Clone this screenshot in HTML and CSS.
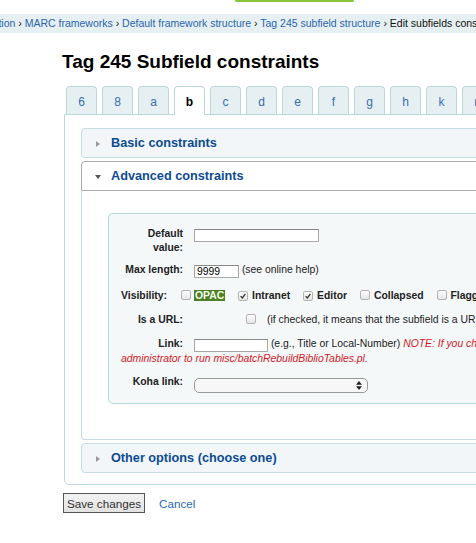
FILE: index.html
```html
<!DOCTYPE html>
<html>
<head>
<meta charset="utf-8">
<title>Tag 245 Subfield constraints</title>
<link rel="stylesheet" href="styles.css">
</head>
<body>
<div class="header"><div class="search-edge"></div></div>
<div class="breadcrumbs">
  <div class="crumbs"><a href="#">Home</a> › <a href="#">Administration</a> › <a href="#">MARC frameworks</a> › <a href="#">Default framework structure</a> › <a href="#">Tag 245 subfield structure</a> › Edit subfields constraints</div>
</div>
<main class="main">
  <h1>Tag 245 Subfield constraints</h1>
  <ul class="tabs">
    <li><a href="#">6</a></li>
    <li><a href="#">8</a></li>
    <li><a href="#">a</a></li>
    <li class="active"><a href="#">b</a></li>
    <li><a href="#">c</a></li>
    <li><a href="#">d</a></li>
    <li><a href="#">e</a></li>
    <li><a href="#">f</a></li>
    <li><a href="#">g</a></li>
    <li><a href="#">h</a></li>
    <li><a href="#">k</a></li>
    <li><a href="#">n</a></li>
  </ul>
  <div class="panel">
    <div class="acc-head"><span class="tri-right"></span><a href="#">Basic constraints</a></div>
    <div class="acc-head open"><span class="tri-down"></span><a href="#">Advanced constraints</a></div>
    <div class="acc-body">
      <fieldset class="rows">
        <ol>
          <li class="row-default"><label>Default value:</label><input class="in-default" type="text"></li>
          <li class="row-max"><label>Max length:</label><input class="in-max" type="text" value="9999"> (see online help)</li>
          <li class="vis"><span class="vis-label">Visibility:</span>
            <span class="cb"></span><span class="opt opac">OPAC</span>
            <span class="cb checked"><svg viewBox="0 0 10 10" width="8" height="8"><path d="M2 5.2 L4.2 7.4 L8 2.4" fill="none" stroke="#333" stroke-width="1.6"/></svg></span><span class="opt">Intranet</span>
            <span class="cb checked"><svg viewBox="0 0 10 10" width="8" height="8"><path d="M2 5.2 L4.2 7.4 L8 2.4" fill="none" stroke="#333" stroke-width="1.6"/></svg></span><span class="opt">Editor</span>
            <span class="cb"></span><span class="opt">Collapsed</span>
            <span class="cb"></span><span class="opt">Flagged</span>
          </li>
          <li><label>Is a URL:</label><span class="cb url-cb"></span><span class="url-note">(if checked, it means that the subfield is a URL and can be clicked)</span></li>
          <li><label>Link:</label><input class="in-link" type="text"> (e.g., Title or Local-Number) <span class="note">NOTE: If you change this value you must ask your administrator to run misc/batchRebuildBiblioTables.pl.</span></li>
          <li class="row-koha"><label>Koha link:</label><span class="select-wrap"><select class="koha-select"><option></option></select><svg class="sel-arrows" viewBox="0 0 8 12" width="6" height="9"><path d="M4 0 L8 5 L0 5 Z M0 7 L8 7 L4 12 Z" fill="#222"/></svg></span></li>
        </ol>
      </fieldset>
    </div>
    <div class="acc-head other"><span class="tri-right"></span><a href="#">Other options (choose one)</a></div>
  </div>
  <div class="actions">
    <button class="save" type="button">Save changes</button>
    <a class="cancel" href="#">Cancel</a>
  </div>
</main>
</body>
</html>
```

FILE: styles.css
```css
html, body {
  margin: 0;
  padding: 0;
  background: #fff;
  overflow: hidden;
}
body {
  font-family: "Liberation Sans", Arial, sans-serif;
  color: #000;
  width: 476px;
  height: 543px;
}
a {
  text-decoration: none;
}
.header {
  height: 14px;
}
.search-edge {
  margin-left: 235px;
  width: 115px;
  height: 0;
  border: 2px solid #8bc53f;
  border-top: none;
  border-radius: 0 0 3px 3px;
}
.breadcrumbs {
  background: #e6f0f2;
  height: 19px;
  line-height: 19px;
  font-size: 10.5px;
  white-space: nowrap;
  overflow: hidden;
}
.crumbs {
  margin-left: -88px;
  color: #111;
}
.crumbs a {
  color: #2b64ab;
}
.main {
  padding-left: 62px;
}
h1 {
  margin: 18px 0 0 0;
  font-size: 19px;
  line-height: 22px;
  font-weight: bold;
}
.tabs {
  list-style: none;
  margin: 13px 0 0 4px;
  padding: 0;
  display: flex;
  gap: 5px;
  white-space: nowrap;
}
.tabs li {
  flex: none;
  width: 29px;
  height: 27px;
  border: 1px solid #b9d8d9;
  border-bottom: none;
  border-radius: 4px 4px 0 0;
  background: #e6f0f2;
  text-align: center;
  font-size: 12px;
  line-height: 31px;
}
.tabs li a {
  color: #3a6db0;
}
.tabs li.active {
  background: #fff;
  height: 28px;
  margin-bottom: -1px;
  position: relative;
  z-index: 1;
}
.tabs li.active a {
  color: #000;
  font-weight: bold;
}
.panel {
  margin-left: 2px;
  width: 600px;
  border: 1px solid #b9d8d9;
  border-radius: 0 0 0 5px;
  padding: 13px 16px 11px 16px;
}
.acc-head {
  height: 28px;
  line-height: 28px;
  border: 1px solid #c6dce0;
  border-radius: 4px;
  background: #f2f6f8;
  font-size: 12.7px;
  font-weight: bold;
  display: flex;
  align-items: center;
}
.acc-head a {
  color: #0d4b93;
}
.acc-head.open {
  margin-top: 3px;
  background: #fff;
  border-color: #aaa;
  border-radius: 4px 4px 0 0;
}
.acc-head.other {
  margin-top: 3px;
}
.tri-right {
  width: 0;
  height: 0;
  border-top: 3px solid transparent;
  border-bottom: 3px solid transparent;
  border-left: 4px solid #9a9a9a;
  margin: 2px 11px 0 14px;
}
.tri-down {
  width: 0;
  height: 0;
  border-left: 3px solid transparent;
  border-right: 3px solid transparent;
  border-top: 4px solid #555;
  margin: 1px 10px 0 13px;
}
.acc-body {
  border: 1px solid #c6dce0;
  border-top: none;
  border-radius: 0 0 4px 4px;
  padding: 22px 0 35px 26px;
}
fieldset.rows {
  margin: 0;
  padding: 8px 12px 5px 12px;
  width: 540px;
  border: 1px solid #b9d8d9;
  border-radius: 5px;
  background: #f4f8f9;
  font-size: 10.4px;
  color: #222;
}
fieldset.rows ol {
  list-style: none;
  margin: 0;
  padding: 0;
}
fieldset.rows li {
  display: flow-root;
  padding: 5px 0;
  line-height: 14px;
}
fieldset.rows li.row-default {
  padding-bottom: 4px;
}
fieldset.rows li.row-max {
  padding: 4px 0 6px;
}
fieldset.rows label {
  float: left;
  width: 62px;
  margin-right: 11px;
  text-align: right;
  font-weight: bold;
  color: #222;
}
fieldset.rows input {
  box-sizing: border-box;
  height: 13px;
  border: 1px solid #a8a8a8;
  border-top-color: #888;
  padding: 0 2px;
  margin: 0;
  font-family: "Liberation Sans", Arial, sans-serif;
  font-size: 10.4px;
  background: #fff;
  vertical-align: -2px;
}
.in-default { width: 125px; }
.in-max { width: 45px; }
.in-link { width: 74px; }
.vis-label {
  font-weight: bold;
  margin-right: 11px;
}
.cb {
  display: inline-flex;
  align-items: center;
  justify-content: center;
  box-sizing: border-box;
  width: 10px;
  height: 10px;
  border: 1px solid #b4b4b4;
  border-radius: 2px;
  background: linear-gradient(#ffffff, #e4e4e4);
  vertical-align: -1px;
  margin-right: 4px;
}
.opt {
  font-weight: bold;
  margin-right: 10px;
}
.opac {
  background: #4e7e27;
  color: #f2fbe6;
  padding: 0 1px;
  margin-left: -1px;
}
.url-cb {
  margin-left: 52px;
}
.url-note {
  margin-left: 7px;
}
.note {
  color: #d0181f;
  font-style: italic;
}
fieldset.rows li.row-koha {
  padding: 4px 0 5px;
}
.select-wrap {
  position: relative;
  display: inline-block;
  vertical-align: -4px;
  height: 15px;
}
.koha-select {
  appearance: none;
  -webkit-appearance: none;
  display: block;
  box-sizing: border-box;
  width: 174px;
  height: 15px;
  border: 1px solid #9a9a9a;
  border-radius: 5px;
  background: #f7f7f7;
  margin: 0;
  padding: 0;
  font-size: 10px;
}
.sel-arrows {
  position: absolute;
  right: 6px;
  top: 3px;
}
.actions {
  margin-top: 8px;
  display: flex;
  align-items: center;
}
.save {
  margin: 0 0 0 1px;
  width: 82px;
  height: 20px;
  padding: 0;
  border: 1px solid #555;
  background: linear-gradient(#f2f2f2, #e2e2e2);
  font-family: "Liberation Sans", Arial, sans-serif;
  font-size: 11.7px;
  color: #333;
}
.cancel {
  margin-left: 14px;
  font-size: 11.7px;
  color: #2a67b1;
}
```
